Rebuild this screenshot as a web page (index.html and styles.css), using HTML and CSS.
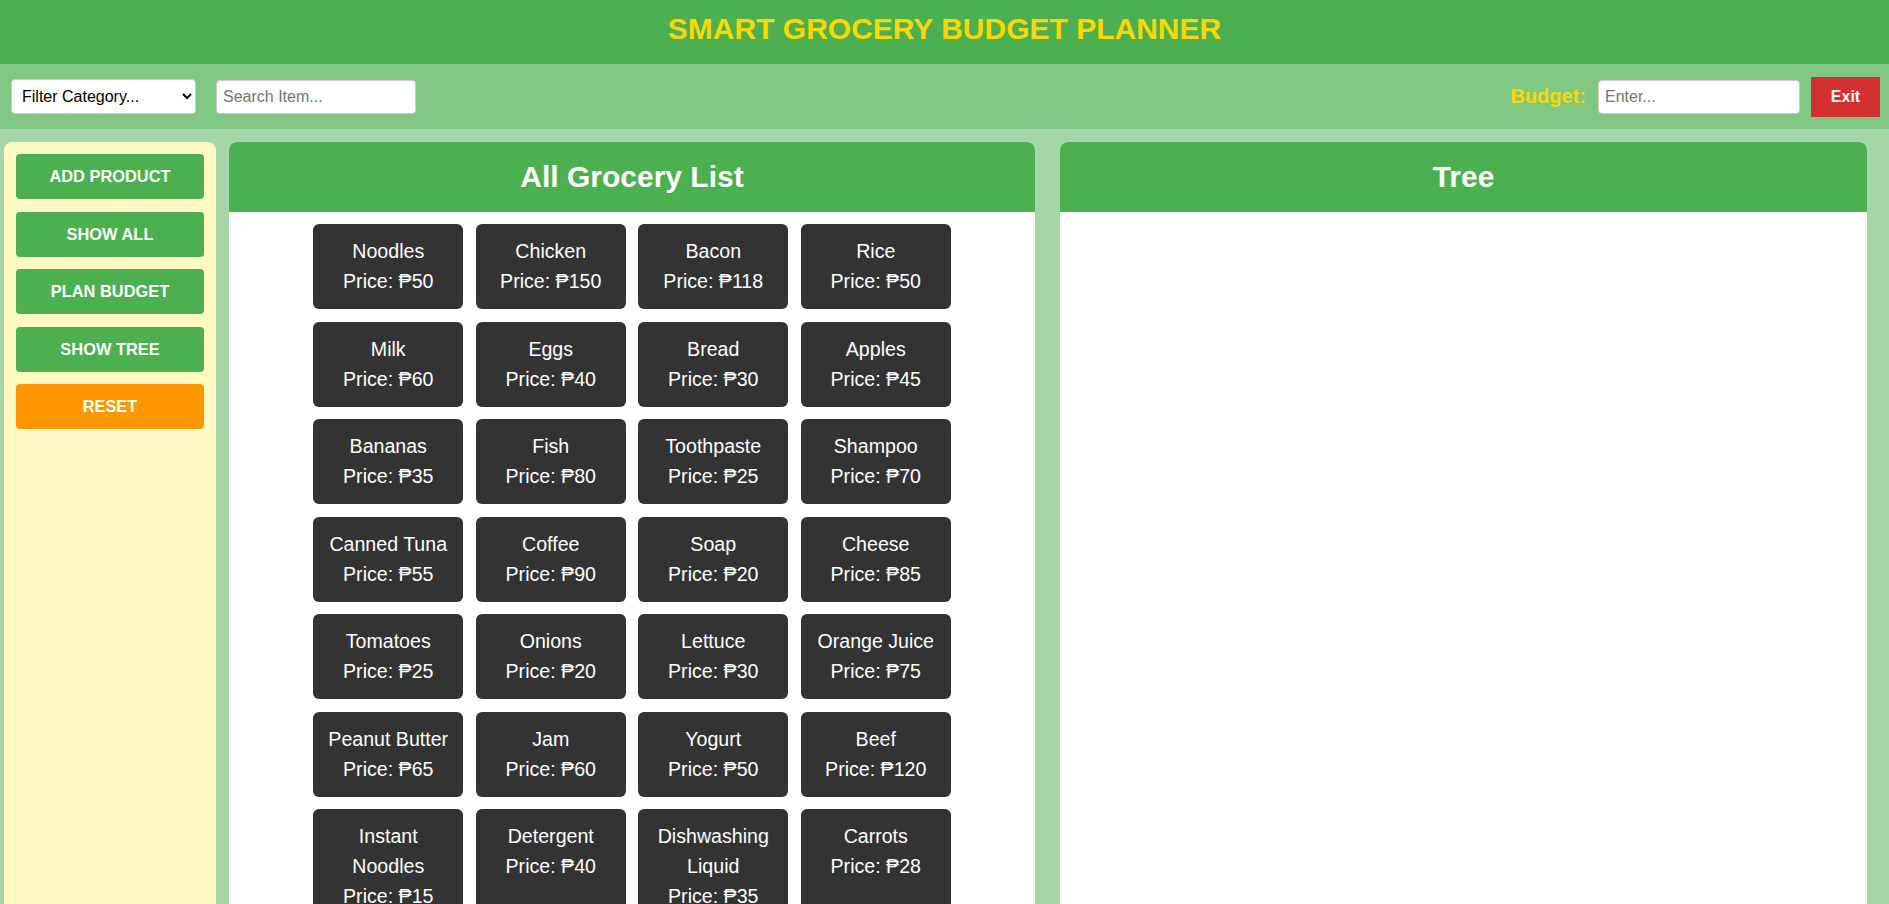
FILE: index.html
```html
<!DOCTYPE html>
<html>
<head>
<meta charset="utf-8">
<title>Smart Grocery Budget Planner</title>
<link rel="stylesheet" href="styles.css">
</head>
<body>
<header class="app-header">
  <h1 class="app-title">SMART GROCERY BUDGET PLANNER</h1>
</header>
<div class="toolbar">
  <select class="filter-select">
    <option>Filter Category...</option>
  </select>
  <input class="search-input" type="text" placeholder="Search Item...">
  <div class="toolbar-spacer"></div>
  <label class="budget-label">Budget:</label>
  <input class="budget-input" type="text" placeholder="Enter...">
  <button class="exit-btn">Exit</button>
</div>
<main class="main">
  <aside class="sidebar">
    <button class="side-btn">ADD PRODUCT</button>
    <button class="side-btn">SHOW ALL</button>
    <button class="side-btn">PLAN BUDGET</button>
    <button class="side-btn">SHOW TREE</button>
    <button class="side-btn reset">RESET</button>
  </aside>
  <section class="panel list-panel">
    <div class="panel-head"><h2 class="panel-title">All Grocery List</h2></div>
    <div class="panel-body">
      <div class="card-grid">
        <div class="card">Noodles<br>Price: ₱50</div>
        <div class="card">Chicken<br>Price: ₱150</div>
        <div class="card">Bacon<br>Price: ₱118</div>
        <div class="card">Rice<br>Price: ₱50</div>
        <div class="card">Milk<br>Price: ₱60</div>
        <div class="card">Eggs<br>Price: ₱40</div>
        <div class="card">Bread<br>Price: ₱30</div>
        <div class="card">Apples<br>Price: ₱45</div>
        <div class="card">Bananas<br>Price: ₱35</div>
        <div class="card">Fish<br>Price: ₱80</div>
        <div class="card">Toothpaste<br>Price: ₱25</div>
        <div class="card">Shampoo<br>Price: ₱70</div>
        <div class="card">Canned Tuna<br>Price: ₱55</div>
        <div class="card">Coffee<br>Price: ₱90</div>
        <div class="card">Soap<br>Price: ₱20</div>
        <div class="card">Cheese<br>Price: ₱85</div>
        <div class="card">Tomatoes<br>Price: ₱25</div>
        <div class="card">Onions<br>Price: ₱20</div>
        <div class="card">Lettuce<br>Price: ₱30</div>
        <div class="card">Orange Juice<br>Price: ₱75</div>
        <div class="card">Peanut Butter<br>Price: ₱65</div>
        <div class="card">Jam<br>Price: ₱60</div>
        <div class="card">Yogurt<br>Price: ₱50</div>
        <div class="card">Beef<br>Price: ₱120</div>
        <div class="card">Instant Noodles<br>Price: ₱15</div>
        <div class="card">Detergent<br>Price: ₱40</div>
        <div class="card">Dishwashing Liquid<br>Price: ₱35</div>
        <div class="card">Carrots<br>Price: ₱28</div>
      </div>
    </div>
  </section>
  <section class="panel tree-panel">
    <div class="panel-head"><h2 class="panel-title">Tree</h2></div>
    <div class="panel-body"></div>
  </section>
</main>
</body>
</html>
```

FILE: styles.css
```css
html, body {
  margin: 0;
  padding: 0;
  height: 100%;
  overflow: hidden;
}
body {
  font-family: "Liberation Sans", Arial, sans-serif;
  background: #A5D6A7;
  display: flex;
  flex-direction: column;
}
.app-header {
  background: #4CAF50;
  height: 64px;
  display: flex;
  align-items: center;
  justify-content: center;
  flex: none;
  box-sizing: border-box;
  padding-bottom: 6px;
}
.app-title {
  margin: 0;
  color: #FFD700;
  font-size: 30px;
  font-weight: bold;
  line-height: 34px;
}
.toolbar {
  background: #81C784;
  height: 65px;
  flex: none;
  display: flex;
  align-items: center;
  padding: 0 9px 0 11px;
  box-sizing: border-box;
}
.filter-select {
  width: 185px;
  height: 35px;
  font-family: "Liberation Sans", Arial, sans-serif;
  font-size: 16px;
  color: #000;
  background: #fff;
  border: 1px solid #ccc;
  border-radius: 4px;
  padding: 0 6px;
  margin: 0;
}
.search-input {
  width: 200px;
  height: 34px;
  box-sizing: border-box;
  margin: 0 0 0 20px;
  font-family: "Liberation Sans", Arial, sans-serif;
  font-size: 16px;
  border: 1px solid #ccc;
  border-radius: 4px;
  padding: 0 6px;
  background: #fff;
}
.toolbar-spacer {
  flex: 1;
}
.budget-label {
  color: #FFD700;
  font-weight: bold;
  font-size: 20px;
  margin-right: 12px;
}
.budget-input {
  width: 202px;
  height: 34px;
  box-sizing: border-box;
  margin: 0;
  font-family: "Liberation Sans", Arial, sans-serif;
  font-size: 16px;
  border: 1px solid #ccc;
  border-radius: 4px;
  padding: 0 6px;
  background: #fff;
}
input::placeholder {
  color: #757575;
}
.exit-btn {
  margin-left: 11px;
  width: 69px;
  height: 40px;
  background: #D32F2F;
  color: #fff;
  border: none;
  font-family: "Liberation Sans", Arial, sans-serif;
  font-weight: bold;
  font-size: 16px;
  padding: 0;
}
.main {
  flex: 1;
  min-height: 0;
  display: flex;
  padding: 13px 22px 0 4px;
  overflow: hidden;
}
.sidebar {
  width: 212px;
  flex: none;
  background: #FFF9C4;
  border-radius: 8px 8px 0 0;
  padding: 12px;
  box-sizing: border-box;
  display: flex;
  flex-direction: column;
  gap: 12.5px;
  margin-right: 13px;
}
.side-btn {
  height: 45px;
  width: 100%;
  background: #4CAF50;
  color: #fff;
  border: none;
  border-radius: 4px;
  font-family: "Liberation Sans", Arial, sans-serif;
  font-weight: bold;
  font-size: 16.4px;
  padding: 0;
  flex: none;
}
.side-btn.reset {
  background: #FF9800;
}
.panel {
  background: #fff;
  border-radius: 8px 8px 0 0;
  display: flex;
  flex-direction: column;
  overflow: hidden;
  flex: none;
}
.list-panel {
  width: 806px;
  margin-right: 25px;
}
.tree-panel {
  width: 807px;
}
.panel-head {
  background: #4CAF50;
  height: 70px;
  display: flex;
  align-items: center;
  justify-content: center;
  flex: none;
}
.panel-title {
  margin: 0;
  color: #fff;
  font-size: 30px;
  font-weight: bold;
}
.panel-body {
  flex: 1;
}
.card-grid {
  display: grid;
  grid-template-columns: repeat(4, 150px);
  justify-content: center;
  gap: 12.5px;
  padding-top: 12px;
}
.card {
  background: #333;
  color: #fff;
  border-radius: 6px;
  padding: 12px 10px;
  text-align: center;
  font-size: 19.6px;
  line-height: 30px;
  box-sizing: border-box;
  min-height: 85px;
}
```
